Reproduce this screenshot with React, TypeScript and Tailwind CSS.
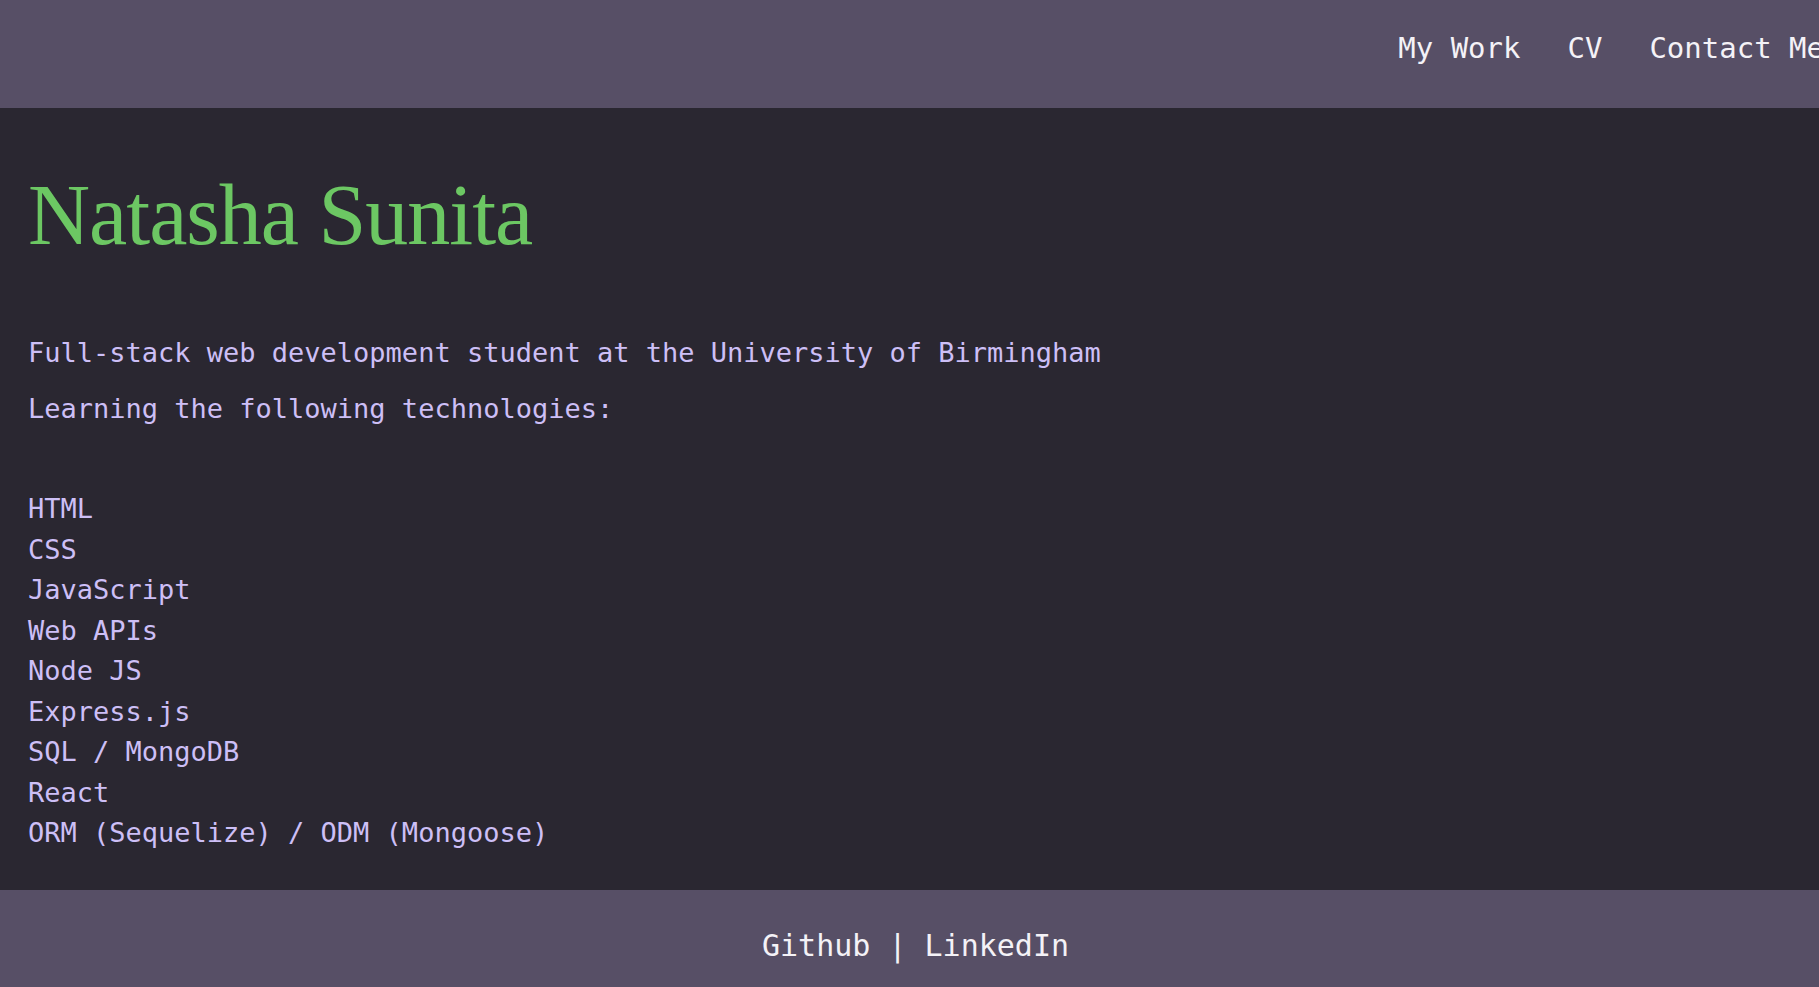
import React from 'react';

const navLinks = ['My Work', 'CV', 'Contact Me'];

const technologies = [
    'HTML',
    'CSS',
    'JavaScript',
    'Web APIs',
    'Node JS',
    'Express.js',
    'SQL / MongoDB',
    'React',
    'ORM (Sequelize) / ODM (Mongoose)',
];

const mono = "font-['DejaVu_Sans_Mono','Liberation_Mono',monospace]";

const Header: React.FC = () => (
    <header className="h-[108px] bg-[#574f66] flex justify-end items-start pt-[27px] overflow-hidden">
        <nav className={`flex gap-[47px] -mr-[5px] shrink-0 ${mono}`}>
            {navLinks.map(link => (
                <a key={link} href="#" className="text-[29px] leading-[1.5] text-[#f4f2f7] whitespace-nowrap">
                    {link}
                </a>
            ))}
        </nav>
    </header>
);

const Footer: React.FC = () => (
    <footer className={`h-[97px] bg-[#574f66] flex justify-center pt-[33px] pl-3 ${mono}`}>
        <p className="text-[30px] leading-[1.5] text-[#f4f2f7] whitespace-nowrap">
            <a href="#">Github</a> | <a href="#">LinkedIn</a>
        </p>
    </footer>
);

export default function App() {
    return (
        <div className="min-h-screen flex flex-col bg-[#2a2731] overflow-hidden">
            <Header />
            <main className="flex-1 px-[28px] pt-[64px] pb-[36px]">
                <h1 className="font-['Liberation_Serif',serif] text-[86px] leading-none tracking-[-1px] text-[#6cc763]">
                    Natasha Sunita
                </h1>
                <div className={`mt-[75px] text-[27px] leading-[1.5] text-[#cdbff6] ${mono}`}>
                    <p>Full-stack web development student at the University of Birmingham</p>
                    <p className="mt-[15px]">Learning the following technologies:</p>
                    <ul className="mt-[60px]">
                        {technologies.map(tech => (
                            <li key={tech}>{tech}</li>
                        ))}
                    </ul>
                </div>
            </main>
            <Footer />
        </div>
    );
}
